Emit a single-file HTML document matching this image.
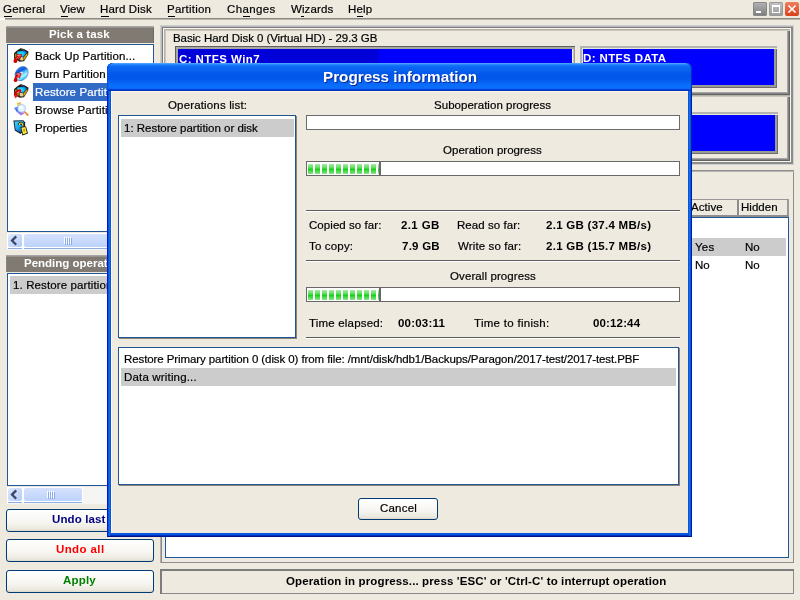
<!DOCTYPE html>
<html><head><meta charset="utf-8"><style>
html,body{margin:0;padding:0;}
body{width:800px;height:600px;overflow:hidden;background:#eeeae0;position:relative;font-family:'Liberation Sans', sans-serif;}
.b{position:absolute;}
.t{position:absolute;white-space:pre;-webkit-font-smoothing:antialiased;will-change:transform;-webkit-text-stroke:0.2px currentColor;line-height:20px;font-family:'Liberation Sans', sans-serif;color:#000;}
</style></head><body>
<span class="t" style="left:2.60px;top:-0.80px;font-size:11.5px;letter-spacing:0.207px;">General</span>
<span class="t" style="left:60.42px;top:-0.80px;font-size:11.5px;letter-spacing:-0.005px;">View</span>
<span class="t" style="left:99.84px;top:-0.80px;font-size:11.5px;letter-spacing:0.150px;">Hard Disk</span>
<span class="t" style="left:166.85px;top:-0.80px;font-size:11.5px;letter-spacing:0.220px;">Partition</span>
<span class="t" style="left:226.61px;top:-0.80px;font-size:11.5px;letter-spacing:0.355px;">Changes</span>
<span class="t" style="left:290.53px;top:-0.80px;font-size:11.5px;letter-spacing:0.103px;">Wizards</span>
<span class="t" style="left:347.84px;top:-0.80px;font-size:11.5px;letter-spacing:0.152px;">Help</span>
<div class="b " style="left:4px;top:16px;width:8px;height:1px;background:#000;"></div>
<div class="b " style="left:61px;top:16px;width:7px;height:1px;background:#000;"></div>
<div class="b " style="left:101px;top:16px;width:8px;height:1px;background:#000;"></div>
<div class="b " style="left:168px;top:16px;width:7px;height:1px;background:#000;"></div>
<div class="b " style="left:243px;top:16px;width:7px;height:1px;background:#000;"></div>
<div class="b " style="left:301px;top:16px;width:3px;height:1px;background:#000;"></div>
<div class="b " style="left:357px;top:16px;width:6px;height:1px;background:#000;"></div>
<div class="b " style="left:0px;top:18px;width:800px;height:1px;background:#88887f;"></div>
<div class="b " style="left:0px;top:19px;width:800px;height:1px;background:#b8b6ae;"></div>
<div class="b " style="left:0px;top:18px;width:5px;height:2px;background:#fff;"></div>
<div class="b " style="left:753px;top:2px;width:14px;height:14px;background:linear-gradient(#b4b4b4,#7c7c7c);border-radius:2px;box-shadow:inset 0 0 0 1px #888;"><div style="position:absolute;left:3px;top:9px;width:5px;height:2px;background:#fff"></div></div>
<div class="b " style="left:769px;top:2px;width:14px;height:14px;background:linear-gradient(#c4c4c4,#9a9a9a);border-radius:2px;box-shadow:inset 0 0 0 1px #999;"><div style="position:absolute;left:3px;top:3px;width:6px;height:5px;border:1px solid #fff;border-top-width:2px"></div></div>
<div class="b " style="left:785px;top:2px;width:14px;height:14px;background:linear-gradient(#f08060,#d8401c);border-radius:2px;"><svg width="14" height="14" style="position:absolute;left:0;top:0"><path d="M3.5 3.5L10.5 10.5M10.5 3.5L3.5 10.5" stroke="#fff" stroke-width="1.6"/></svg></div>
<div class="b " style="left:6px;top:26px;width:148px;height:17px;background:#817a72;box-shadow:inset 0 1px 0 #a6a4a6, inset 0 2px 0 #96938e, inset -1px 0 0 #6c6a66, inset 1px 0 0 #8a8680;"></div>
<span class="t" style="left:48.89px;top:24.20px;font-size:11.5px;font-weight:bold;-webkit-text-stroke:0;color:#fff;letter-spacing:0.128px;">Pick a task</span>
<div class="b " style="left:7px;top:44px;width:147px;height:188px;background:#fff;border:1px solid #22589a;border-width:1px 1px 1.5px 1.5px;box-sizing:border-box;"></div>
<div class="b " style="left:33px;top:83px;width:121px;height:18px;background:#316ac5;"></div>
<span class="t" style="left:34.85px;top:46.20px;font-size:11.5px;letter-spacing:0.097px;">Back Up Partition...</span>
<span class="t" style="left:34.85px;top:64.20px;font-size:11.5px;letter-spacing:0.075px;">Burn Partition</span>
<span class="t" style="left:34.85px;top:82.20px;font-size:11.5px;color:#fff;letter-spacing:0.120px;">Restore Partition</span>
<span class="t" style="left:34.85px;top:100.20px;font-size:11.5px;letter-spacing:0.120px;">Browse Partition</span>
<span class="t" style="left:34.85px;top:118.20px;font-size:11.5px;letter-spacing:-0.022px;">Properties</span>
<svg class="b" style="left:11px;top:46px" width="20" height="20" viewBox="0 0 20 20"><defs><radialGradient id="gbup" cx="0.35" cy="0.55" r="0.7"><stop offset="0" stop-color="#30f0ff"/><stop offset="0.45" stop-color="#10c8f8"/><stop offset="1" stop-color="#0a50d8"/></radialGradient></defs>
<path d="M3 7.2L6 4.6L9.5 2.2L13.5 3.2L17.4 5.6L17.2 8.6L13 15.2L8.6 15.8L3 12.6Z" fill="#201c14"/>
<path d="M6.2 5.4L13.6 4.4L16 6.4L12.2 10.9L8.6 9.8L6 7.4Z" fill="url(#gbup)"/>
<path d="M12.6 11.4L16.4 7L16.4 8.8L12.6 14.4Z" fill="#f2c414"/>
<path d="M12.9 12.6L16 8.6" stroke="#c89000" stroke-width="0.7"/>
<path d="M8.8 10.4L12.2 11.4L12.2 14.6L8.8 14.2Z" fill="#eccb90"/>
<path d="M3.8 7.8L6 7.6L8.4 10L8.4 13.8L3.8 12Z" fill="#8c8a22"/>
<path d="M10 2.8L12.6 3.4" stroke="#6a6a6a" stroke-width="0.8"/><path d="M4.6 15C4.6 12.6 5.8 11.2 7.8 10.6" stroke="#d00000" stroke-width="2.6" fill="none" stroke-linecap="round"/>
<path d="M5.2 8.6L10.8 8.2L8.8 13.6Z" fill="#e82828" stroke="#8a0000" stroke-width="0.5"/>
<path d="M6.4 9.4L9.4 9.2" stroke="#ff9c9c" stroke-width="0.9"/>
<path d="M5.4 12.6C5.8 11.8 6.6 11.2 7.6 10.9" stroke="#ff8c8c" stroke-width="0.8" fill="none"/>
<circle cx="4.4" cy="15" r="2" fill="#d80000"/></svg>
<svg class="b" style="left:11px;top:64px" width="20" height="20" viewBox="0 0 20 20"><defs><linearGradient id="gcd" x1="0" y1="0.2" x2="1" y2="0.8"><stop offset="0" stop-color="#3a90f0"/><stop offset="0.3" stop-color="#0a54dc"/><stop offset="0.5" stop-color="#58c8ff"/><stop offset="0.68" stop-color="#b0f4ff"/><stop offset="0.85" stop-color="#40d0ff"/><stop offset="1" stop-color="#20a0f0"/></linearGradient></defs>
<ellipse cx="10.6" cy="9.6" rx="6" ry="7.6" transform="rotate(35 10.6 9.6)" fill="url(#gcd)" stroke="#4070b0" stroke-width="0.6"/>
<ellipse cx="10.4" cy="8.8" rx="1.3" ry="1.1" fill="#f8f8f0"/>
<path d="M4.6 16.4C4.4 13.8 5.6 12.2 7.6 11.6" stroke="#d00000" stroke-width="2.6" fill="none" stroke-linecap="round"/>
<path d="M4.8 9.2L10.2 9.2L8.6 14.4Z" fill="#f04040" stroke="#8a0000" stroke-width="0.5"/>
<path d="M5.8 10L8.8 10" stroke="#ff9c9c" stroke-width="0.9"/>
<path d="M5.8 14C6.2 13 7 12.2 8 11.9" stroke="#ff9090" stroke-width="0.8" fill="none"/>
<circle cx="4.6" cy="16.2" r="1.8" fill="#d00000"/></svg>
<svg class="b" style="left:11px;top:82px" width="20" height="20" viewBox="0 0 20 20"><defs><radialGradient id="gbdown" cx="0.35" cy="0.55" r="0.7"><stop offset="0" stop-color="#30f0ff"/><stop offset="0.45" stop-color="#10c8f8"/><stop offset="1" stop-color="#0a50d8"/></radialGradient></defs>
<path d="M3 7.2L6 4.6L9.5 2.2L13.5 3.2L17.4 5.6L17.2 8.6L13 15.2L8.6 15.8L3 12.6Z" fill="#201c14"/>
<path d="M6.2 5.4L13.6 4.4L16 6.4L12.2 10.9L8.6 9.8L6 7.4Z" fill="url(#gbdown)"/>
<path d="M12.6 11.4L16.4 7L16.4 8.8L12.6 14.4Z" fill="#f2c414"/>
<path d="M12.9 12.6L16 8.6" stroke="#c89000" stroke-width="0.7"/>
<path d="M8.8 10.4L12.2 11.4L12.2 14.6L8.8 14.2Z" fill="#eccb90"/>
<path d="M3.8 7.8L6 7.6L8.4 10L8.4 13.8L3.8 12Z" fill="#8c8a22"/>
<path d="M10 2.8L12.6 3.4" stroke="#6a6a6a" stroke-width="0.8"/><path d="M8.8 8.8C6 9 4.4 10.8 4.6 13.2" stroke="#d80000" stroke-width="3" fill="none" stroke-linecap="round"/>
<path d="M2.6 12.4L7.4 13.4L4.4 16.6Z" fill="#e82020"/>
<path d="M5.8 11C6.6 10.2 7.4 9.8 8.6 9.8" stroke="#ff9a9a" stroke-width="0.9" fill="none"/></svg>
<svg class="b" style="left:11px;top:100px" width="20" height="20" viewBox="0 0 20 20"><path d="M5.6 2.8L9.6 2.4L10.8 4L7.6 6.4L6 5.4Z" fill="#f0d060"/>
<path d="M7 3.4L9.4 3" stroke="#c8a030" stroke-width="0.7"/>
<path d="M3 8L6.8 6.4L9.6 11L6.2 12.4Z" fill="#3a7af0"/>
<path d="M3.4 8.6L6.2 7.6" stroke="#80b0ff" stroke-width="0.8"/>
<path d="M6.4 11.8L10.4 9.8L13.4 13.4L9.6 15.4Z" fill="#a878e8"/>
<path d="M7.4 13L10.6 11.4" stroke="#7040c0" stroke-width="0.7"/>
<path d="M13.4 11.6L16.8 15" stroke="#f09040" stroke-width="1.8" stroke-linecap="round"/>
<circle cx="10.6" cy="8.4" r="3.9" fill="#e6f4ff" stroke="#98bce8" stroke-width="0.8"/>
<circle cx="9.8" cy="7.6" r="1.8" fill="#fff"/></svg>
<svg class="b" style="left:11px;top:118px" width="20" height="20" viewBox="0 0 20 20"><defs><linearGradient id="gpr" x1="0" y1="0" x2="0.6" y2="1"><stop offset="0" stop-color="#40d8ff"/><stop offset="0.6" stop-color="#18a8f0"/><stop offset="1" stop-color="#0a58c8"/></linearGradient></defs>
<path d="M2.4 2.6L12.2 2.2L14.4 4.4L13.4 12L9.6 16L3.8 12.6Z" fill="#141820"/>
<path d="M3.4 3.4L11.8 3L13.2 5L12.4 11.4L9.4 14.6L4.6 11.8Z" fill="url(#gpr)"/>
<path d="M8.4 7C8 4.6 11.4 4.2 11.8 6.6L11.8 8.4" stroke="#1a1a10" stroke-width="2.4" fill="none"/>
<path d="M8.4 7C8 4.6 11.4 4.2 11.8 6.6L11.8 8.4" stroke="#f4e040" stroke-width="1.1" fill="none"/>
<path d="M9.4 9L15 8.2L17 15.6L11.4 17.4Z" fill="#1a1a10"/>
<path d="M10.3 9.7L14.4 9.1L15.9 14.9L12 16.3Z" fill="#f8ec40"/>
<path d="M12 11L13.8 10.7L14.3 13.2L12.5 13.7Z" fill="#c0a010"/></svg>
<div class="b " style="left:7px;top:233px;width:147px;height:17px;background:#f5f5f3;"></div>
<div class="b " style="left:7px;top:233px;width:16px;height:16px;background:#fff;"></div>
<div class="b " style="left:23px;top:233px;width:98px;height:16px;background:#fff;"></div>
<div class="b " style="left:8px;top:234px;width:14px;height:13px;background:linear-gradient(135deg,#dfe8fd,#b4ccf9);border-radius:2px;"></div>
<div class="b " style="left:8px;top:248px;width:14px;height:1px;background:#8eaee2;"></div>
<div class="b " style="left:24px;top:248px;width:96px;height:1px;background:#8eaee2;"></div>
<svg class="b" style="left:7px;top:234px" width="16" height="15"><path d="M9.2 2.4L5 6.6L9.2 10.8" stroke="#3a4868" stroke-width="2.3" fill="none"/></svg>
<div class="b " style="left:24px;top:234px;width:96px;height:13px;background:linear-gradient(#d6e2fd,#bcd2fb);border-radius:2px;"><svg width="10" height="8" style="position:absolute;left:40px;top:3px"><path d="M0.5 0V7M2.5 0V7M4.5 0V7M6.5 0V7" stroke="#fff" stroke-width="1"/><path d="M1.5 1V8M3.5 1V8M5.5 1V8M7.5 1V8" stroke="#8aa8ee" stroke-width="1"/></svg></div>
<div class="b " style="left:6px;top:255px;width:148px;height:17px;background:#817a72;box-shadow:inset 0 1px 0 #a6a4a6, inset 0 2px 0 #96938e, inset -1px 0 0 #6c6a66, inset 1px 0 0 #8a8680;"></div>
<span class="t" style="left:23.89px;top:253.20px;font-size:11.5px;font-weight:bold;-webkit-text-stroke:0;color:#fff;">Pending operations</span>
<div class="b " style="left:7px;top:273px;width:147px;height:213px;background:#fff;border:1px solid #22589a;border-width:1px 1px 1.5px 1.5px;box-sizing:border-box;"></div>
<div class="b " style="left:10px;top:276px;width:144px;height:18px;background:#cccccc;"></div>
<span class="t" style="left:13.00px;top:275.20px;font-size:11.5px;letter-spacing:0.120px;">1. Restore partition or disk</span>
<div class="b " style="left:7px;top:487px;width:147px;height:17px;background:#f5f5f3;"></div>
<div class="b " style="left:7px;top:487px;width:16px;height:16px;background:#fff;"></div>
<div class="b " style="left:23px;top:487px;width:60px;height:16px;background:#fff;"></div>
<div class="b " style="left:8px;top:488px;width:14px;height:13px;background:linear-gradient(135deg,#dfe8fd,#b4ccf9);border-radius:2px;"></div>
<div class="b " style="left:8px;top:502px;width:14px;height:1px;background:#8eaee2;"></div>
<div class="b " style="left:24px;top:502px;width:58px;height:1px;background:#8eaee2;"></div>
<svg class="b" style="left:7px;top:488px" width="16" height="15"><path d="M9.2 2.4L5 6.6L9.2 10.8" stroke="#3a4868" stroke-width="2.3" fill="none"/></svg>
<div class="b " style="left:24px;top:488px;width:58px;height:13px;background:linear-gradient(#d6e2fd,#bcd2fb);border-radius:2px;"><svg width="10" height="8" style="position:absolute;left:23px;top:3px"><path d="M0.5 0V7M2.5 0V7M4.5 0V7M6.5 0V7" stroke="#fff" stroke-width="1"/><path d="M1.5 1V8M3.5 1V8M5.5 1V8M7.5 1V8" stroke="#8aa8ee" stroke-width="1"/></svg></div>
<div class="b " style="left:6px;top:509px;width:148px;height:23px;background:linear-gradient(#ffffff,#f6f5f0 60%,#ebe8de 90%,#dcd8cc);border:1px solid #003c74;border-radius:3px;box-sizing:border-box;"></div>
<span class="t" style="left:52.11px;top:509.20px;font-size:11.5px;font-weight:bold;-webkit-text-stroke:0;color:#000080;letter-spacing:0.121px;">Undo last</span>
<div class="b " style="left:6px;top:539px;width:148px;height:23px;background:linear-gradient(#ffffff,#f6f5f0 60%,#ebe8de 90%,#dcd8cc);border:1px solid #003c74;border-radius:3px;box-sizing:border-box;"></div>
<span class="t" style="left:56.11px;top:539.20px;font-size:11.5px;font-weight:bold;-webkit-text-stroke:0;color:#ff0000;letter-spacing:0.394px;">Undo all</span>
<div class="b " style="left:6px;top:570px;width:148px;height:23px;background:linear-gradient(#ffffff,#f6f5f0 60%,#ebe8de 90%,#dcd8cc);border:1px solid #003c74;border-radius:3px;box-sizing:border-box;"></div>
<span class="t" style="left:62.69px;top:570.20px;font-size:11.5px;font-weight:bold;-webkit-text-stroke:0;color:#008000;letter-spacing:0.201px;">Apply</span>
<div class="b " style="left:160px;top:25px;width:634px;height:140px;box-shadow:inset 1px 1px 0 #cbcccd, inset -1px -1px 0 #d0d2d2, inset 2px 2px 0 #b9babb, inset 3px 3px 0 #7c7c7c, inset -3px -3px 0 #8c8c8c, inset 4px 4px 0 #f8f6ea, inset -4px -4px 0 #f8f6ea;"></div>
<div class="b " style="left:164px;top:29px;width:626px;height:66px;box-shadow:inset 1px 1px 0 #b4b0a8, inset 2px 2px 0 #ccc8be, inset -1px -1px 0 #646464, inset -2px -2px 0 #848484, inset -3px -3px 0 #a4a4a4;"></div>
<span class="t" style="left:172.85px;top:28.20px;font-size:11.5px;letter-spacing:-0.065px;">Basic Hard Disk 0 (Virtual HD) - 29.3 GB</span>
<div class="b " style="left:175px;top:46px;width:400px;height:42px;background:#0000ff;box-shadow:inset 1px 1px 0 #5e5e5e, inset 3px 3px 0 #a8a8a0, inset -1px -1px 0 #9c9c9c, inset -2px -2px 0 #c4c4be, inset -3px -3px 0 #f4f2e4;"></div>
<div class="b " style="left:178px;top:49px;width:201px;height:36px;background:#0000d8;"></div>
<span class="t" style="left:179.49px;top:49.20px;font-size:11.5px;font-weight:bold;-webkit-text-stroke:0;color:#fff;letter-spacing:0.427px;">C: NTFS Win7</span>
<div class="b " style="left:580px;top:46px;width:197px;height:42px;background:#0000ff;box-shadow:inset 2px 2px 0 #b4b4b2, inset 3px 3px 0 #e8e6da, inset -1px -1px 0 #6e6e6e, inset -3px -3px 0 #9a9a96;"></div>
<span class="t" style="left:582.89px;top:48.20px;font-size:11.5px;font-weight:bold;-webkit-text-stroke:0;color:#fff;letter-spacing:0.393px;">D: NTFS DATA</span>
<div class="b " style="left:164px;top:95px;width:626px;height:66px;box-shadow:inset 1px 1px 0 #b4b0a8, inset 2px 2px 0 #ccc8be, inset -1px -1px 0 #646464, inset -2px -2px 0 #848484, inset -3px -3px 0 #a4a4a4;"></div>
<div class="b " style="left:580px;top:112px;width:198px;height:42px;background:#0000ff;box-shadow:inset 2px 2px 0 #b4b4b2, inset 3px 3px 0 #e8e6da, inset -1px -1px 0 #6e6e6e, inset -3px -3px 0 #9a9a96;"></div>
<div class="b " style="left:160px;top:170px;width:634px;height:393px;box-shadow:inset 0 1px 0 #8e8e8e, inset 0 2px 0 #b4b4b0, inset 1px 0 0 #b0b0b0, inset 2px 0 0 #8a8a8a, inset -1px 0 0 #8e8e8e, inset 0 -1px 0 #8e8e8e;"></div>
<div class="b " style="left:165px;top:199px;width:624px;height:18px;background:#eeeae0;box-shadow:inset 0 1px 0 #999, inset 0 -2px 0 #8e8e8e;"></div>
<div class="b " style="left:737px;top:200px;width:3px;height:15px;background:#8c8c8c;box-shadow:inset -1px 0 0 #f4f2e8;"></div>
<div class="b " style="left:787px;top:200px;width:2px;height:15px;background:#9a9a9a;"></div>
<span class="t" style="left:691.48px;top:197.20px;font-size:11.5px;letter-spacing:0.076px;">Active</span>
<span class="t" style="left:740.84px;top:197.20px;font-size:11.5px;letter-spacing:0.034px;">Hidden</span>
<div class="b " style="left:165px;top:217px;width:624px;height:341px;background:#fff;border:1px solid #22589a;box-sizing:border-box;"></div>
<div class="b " style="left:690px;top:238px;width:96px;height:18px;background:#cccccc;"></div>
<span class="t" style="left:694.60px;top:237.20px;font-size:11.5px;letter-spacing:0.211px;">Yes</span>
<span class="t" style="left:744.84px;top:237.20px;font-size:11.5px;">No</span>
<span class="t" style="left:694.64px;top:255.20px;font-size:11.5px;">No</span>
<span class="t" style="left:744.84px;top:255.20px;font-size:11.5px;">No</span>
<div class="b " style="left:160px;top:569px;width:634px;height:25px;box-shadow:inset 2px 2px 0 #7c7c7c, inset -1px -1px 0 #8a8a8a;"></div>
<span class="t" style="left:286.49px;top:571.20px;font-size:11.5px;font-weight:bold;-webkit-text-stroke:0;letter-spacing:0.128px;">Operation in progress... press 'ESC' or 'Ctrl-C' to interrupt operation</span>
<div class="b " style="left:107px;top:63px;width:585px;height:474px;background:#0855dd;border-radius:6px 6px 0 0;box-shadow:inset 1px 0 0 #0019cf, inset -1px 0 0 #001ea0, inset 0 -1px 0 #00138c, inset 2px 0 0 #0855dd, inset 3px 0 0 #166aee, inset -2px 0 0 #0855dd, inset -3px 0 0 #166aee, inset 0 -2px 0 #0030c0;"></div>
<div class="b " style="left:107px;top:63px;width:585px;height:28px;border-radius:6px 6px 0 0;background:linear-gradient(#5aaaff 0px,#3a94ff 1px,#1a78fa 2px,#0a68f2 4px,#0860ee 8px,#0056e8 12px,#0058ea 16px,#0866f6 20px,#0a70ff 24px,#0a68f8 25.5px,#0044d8 26.5px,#0024b8 28px);box-shadow:inset 1px 0 0 #0a4ee0, inset -1px 0 0 #0030c0;"></div>
<div class="b " style="left:111px;top:91px;width:577px;height:442px;background:#eeeae0;box-shadow:inset 1px 1px 0 #fff8e4;"></div>
<span class="t" style="left:322.94px;top:66.94px;font-size:15.3px;font-weight:bold;-webkit-text-stroke:0;color:#fff;text-shadow:1px 1px 0 #0a2a9a;letter-spacing:-0.032px;">Progress information</span>
<span class="t" style="left:167.67px;top:95.20px;font-size:11.5px;letter-spacing:0.153px;">Operations list:</span>
<div class="b " style="left:118px;top:115px;width:178px;height:223px;background:#fff;border:1px solid #1f5590;box-sizing:border-box;box-shadow:1px 1px 0 #8c8478;"></div>
<div class="b " style="left:121px;top:119px;width:173px;height:18px;background:#cccccc;"></div>
<span class="t" style="left:124.00px;top:118.20px;font-size:11.5px;letter-spacing:-0.014px;">1: Restore partition or disk</span>
<span class="t" style="left:434.13px;top:95.20px;font-size:11.5px;letter-spacing:0.033px;">Suboperation progress</span>
<div class="b " style="left:306px;top:115px;width:374px;height:15px;background:#fff;border:1px solid #6b6b6b;box-sizing:border-box;"></div>
<span class="t" style="left:442.67px;top:140.20px;font-size:11.5px;letter-spacing:0.020px;">Operation progress</span>
<div class="b " style="left:306px;top:161px;width:374px;height:15px;background:#fff;border:1px solid #686868;box-sizing:border-box;"><div style="position:absolute;left:0;top:0;width:72px;height:13px;overflow:hidden"><div style="position:absolute;left:1px;top:2px;width:5px;height:10px;background:linear-gradient(#a6eaa6,#6ee06e 30%,#1ed01e 55%,#5cdc5c 80%,#8ae48a)"></div><div style="position:absolute;left:8px;top:2px;width:5px;height:10px;background:linear-gradient(#a6eaa6,#6ee06e 30%,#1ed01e 55%,#5cdc5c 80%,#8ae48a)"></div><div style="position:absolute;left:15px;top:2px;width:5px;height:10px;background:linear-gradient(#a6eaa6,#6ee06e 30%,#1ed01e 55%,#5cdc5c 80%,#8ae48a)"></div><div style="position:absolute;left:22px;top:2px;width:5px;height:10px;background:linear-gradient(#a6eaa6,#6ee06e 30%,#1ed01e 55%,#5cdc5c 80%,#8ae48a)"></div><div style="position:absolute;left:29px;top:2px;width:5px;height:10px;background:linear-gradient(#a6eaa6,#6ee06e 30%,#1ed01e 55%,#5cdc5c 80%,#8ae48a)"></div><div style="position:absolute;left:36px;top:2px;width:5px;height:10px;background:linear-gradient(#a6eaa6,#6ee06e 30%,#1ed01e 55%,#5cdc5c 80%,#8ae48a)"></div><div style="position:absolute;left:43px;top:2px;width:5px;height:10px;background:linear-gradient(#a6eaa6,#6ee06e 30%,#1ed01e 55%,#5cdc5c 80%,#8ae48a)"></div><div style="position:absolute;left:50px;top:2px;width:5px;height:10px;background:linear-gradient(#a6eaa6,#6ee06e 30%,#1ed01e 55%,#5cdc5c 80%,#8ae48a)"></div><div style="position:absolute;left:57px;top:2px;width:5px;height:10px;background:linear-gradient(#a6eaa6,#6ee06e 30%,#1ed01e 55%,#5cdc5c 80%,#8ae48a)"></div><div style="position:absolute;left:64px;top:2px;width:5px;height:10px;background:linear-gradient(#a6eaa6,#6ee06e 30%,#1ed01e 55%,#5cdc5c 80%,#8ae48a)"></div><div style="position:absolute;left:71px;top:2px;width:5px;height:10px;background:linear-gradient(#a6eaa6,#6ee06e 30%,#1ed01e 55%,#5cdc5c 80%,#8ae48a)"></div></div><div style="position:absolute;left:72px;top:0;width:1.5px;height:13px;background:#686868"></div></div>
<div class="b " style="left:306px;top:210px;width:374px;height:1px;background:#5c5c5a;box-shadow:0 1px 0 #fff;"></div>
<span class="t" style="left:308.61px;top:215.20px;font-size:11.5px;letter-spacing:0.058px;">Copied so far:</span>
<span class="t" style="left:400.85px;top:215.20px;font-size:11.5px;font-weight:bold;-webkit-text-stroke:0;letter-spacing:0.386px;">2.1 GB</span>
<span class="t" style="left:456.85px;top:215.20px;font-size:11.5px;letter-spacing:0.060px;">Read so far:</span>
<span class="t" style="left:545.85px;top:215.20px;font-size:11.5px;font-weight:bold;-webkit-text-stroke:0;letter-spacing:0.274px;">2.1 GB (37.4 MB/s)</span>
<span class="t" style="left:309.18px;top:236.20px;font-size:11.5px;letter-spacing:0.169px;">To copy:</span>
<span class="t" style="left:401.60px;top:236.20px;font-size:11.5px;font-weight:bold;-webkit-text-stroke:0;letter-spacing:0.236px;">7.9 GB</span>
<span class="t" style="left:457.53px;top:236.20px;font-size:11.5px;letter-spacing:0.123px;">Write so far:</span>
<span class="t" style="left:545.85px;top:236.20px;font-size:11.5px;font-weight:bold;-webkit-text-stroke:0;letter-spacing:0.274px;">2.1 GB (15.7 MB/s)</span>
<div class="b " style="left:306px;top:260px;width:374px;height:1px;background:#5c5c5a;box-shadow:0 1px 0 #fff;"></div>
<span class="t" style="left:449.67px;top:266.20px;font-size:11.5px;letter-spacing:0.098px;">Overall progress</span>
<div class="b " style="left:306px;top:287px;width:374px;height:15px;background:#fff;border:1px solid #686868;box-sizing:border-box;"><div style="position:absolute;left:0;top:0;width:72px;height:13px;overflow:hidden"><div style="position:absolute;left:1px;top:2px;width:5px;height:10px;background:linear-gradient(#a6eaa6,#6ee06e 30%,#1ed01e 55%,#5cdc5c 80%,#8ae48a)"></div><div style="position:absolute;left:8px;top:2px;width:5px;height:10px;background:linear-gradient(#a6eaa6,#6ee06e 30%,#1ed01e 55%,#5cdc5c 80%,#8ae48a)"></div><div style="position:absolute;left:15px;top:2px;width:5px;height:10px;background:linear-gradient(#a6eaa6,#6ee06e 30%,#1ed01e 55%,#5cdc5c 80%,#8ae48a)"></div><div style="position:absolute;left:22px;top:2px;width:5px;height:10px;background:linear-gradient(#a6eaa6,#6ee06e 30%,#1ed01e 55%,#5cdc5c 80%,#8ae48a)"></div><div style="position:absolute;left:29px;top:2px;width:5px;height:10px;background:linear-gradient(#a6eaa6,#6ee06e 30%,#1ed01e 55%,#5cdc5c 80%,#8ae48a)"></div><div style="position:absolute;left:36px;top:2px;width:5px;height:10px;background:linear-gradient(#a6eaa6,#6ee06e 30%,#1ed01e 55%,#5cdc5c 80%,#8ae48a)"></div><div style="position:absolute;left:43px;top:2px;width:5px;height:10px;background:linear-gradient(#a6eaa6,#6ee06e 30%,#1ed01e 55%,#5cdc5c 80%,#8ae48a)"></div><div style="position:absolute;left:50px;top:2px;width:5px;height:10px;background:linear-gradient(#a6eaa6,#6ee06e 30%,#1ed01e 55%,#5cdc5c 80%,#8ae48a)"></div><div style="position:absolute;left:57px;top:2px;width:5px;height:10px;background:linear-gradient(#a6eaa6,#6ee06e 30%,#1ed01e 55%,#5cdc5c 80%,#8ae48a)"></div><div style="position:absolute;left:64px;top:2px;width:5px;height:10px;background:linear-gradient(#a6eaa6,#6ee06e 30%,#1ed01e 55%,#5cdc5c 80%,#8ae48a)"></div><div style="position:absolute;left:71px;top:2px;width:5px;height:10px;background:linear-gradient(#a6eaa6,#6ee06e 30%,#1ed01e 55%,#5cdc5c 80%,#8ae48a)"></div></div><div style="position:absolute;left:72px;top:0;width:1.5px;height:13px;background:#686868"></div></div>
<span class="t" style="left:309.18px;top:313.20px;font-size:11.5px;letter-spacing:0.182px;">Time elapsed:</span>
<span class="t" style="left:397.65px;top:313.20px;font-size:11.5px;font-weight:bold;-webkit-text-stroke:0;letter-spacing:0.196px;">00:03:11</span>
<span class="t" style="left:474.18px;top:313.20px;font-size:11.5px;letter-spacing:0.286px;">Time to finish:</span>
<span class="t" style="left:592.65px;top:313.20px;font-size:11.5px;font-weight:bold;-webkit-text-stroke:0;letter-spacing:0.147px;">00:12:44</span>
<div class="b " style="left:306px;top:337px;width:374px;height:1px;background:#5c5c5a;box-shadow:0 1px 0 #fff;"></div>
<div class="b " style="left:118px;top:347px;width:561px;height:138px;background:#fff;border:1px solid #1f5590;box-sizing:border-box;box-shadow:1px 1px 0 #8c8478;"></div>
<div class="b " style="left:121px;top:368px;width:555px;height:18px;background:#cccccc;"></div>
<span class="t" style="left:123.85px;top:349.20px;font-size:11.5px;letter-spacing:-0.093px;">Restore Primary partition 0 (disk 0) from file: /mnt/disk/hdb1/Backups/Paragon/2017-test/2017-test.PBF</span>
<span class="t" style="left:123.84px;top:367.20px;font-size:11.5px;letter-spacing:0.168px;">Data writing...</span>
<div class="b " style="left:358px;top:498px;width:80px;height:22px;background:linear-gradient(#ffffff,#f6f5f0 60%,#ebe8de 90%,#dcd8cc);border:1px solid #003c74;border-radius:3px;box-sizing:border-box;"></div>
<span class="t" style="left:379.61px;top:498.20px;font-size:11.5px;letter-spacing:0.205px;">Cancel</span>
</body></html>
